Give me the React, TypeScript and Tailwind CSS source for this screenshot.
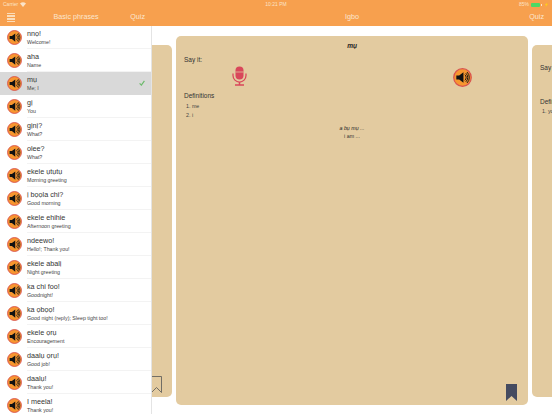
const rows: [string, string, boolean?][] = [
  ["nnọ!", "Welcome!"],
  ["aha", "Name"],
  ["mụ", "Me; I", true],
  ["gị", "You"],
  ["gịnị?", "What?"],
  ["olee?", "What?"],
  ["ekele ụtụtụ", "Morning greeting"],
  ["ị bọọla chi?", "Good morning"],
  ["ekele ehihie", "Afternoon greeting"],
  ["ndeewo!", "Hello!; Thank you!"],
  ["ekele abalị", "Night greeting"],
  ["ka chi foo!", "Goodnight!"],
  ["ka ọbọọ!", "Good night (reply); Sleep tight too!"],
  ["ekele ọrụ", "Encouragement"],
  ["daalụ ọrụ!", "Good job!"],
  ["daalụ!", "Thank you!"],
  ["I meela!", "Thank you!"],
];

function Speaker({ size }: { size: number }) {
  return (
    <svg width={size} height={size} viewBox="0 0 40 40" className="shrink-0">
      <circle cx="20" cy="20" r="18.5" fill="#F7962F" stroke="#D9534F" strokeWidth="2.5" />
      <path d="M7 16h6l9-7v22l-9-7H7z" fill="#111" />
      <path d="M25 14a8 8 0 0 1 0 12M27 11a12 12 0 0 1 0 18M29.500 8.500a16 16 0 0 1 0 23" fill="none" stroke="#111" strokeWidth="2" />
    </svg>
  );
}

function Mic() {
  return (
    <svg width="15" height="20" viewBox="0 0 30 40" fill="none">
      <rect x="7" y="1" width="16" height="26" rx="8" fill="#D9475A" />
      <path d="M7 12h16" stroke="#E3CBA0" strokeWidth="1.500" />
      <path d="M2 15v4a13 13 0 0 0 26 0v-4" stroke="#D9475A" strokeWidth="2.500" />
      <path d="M15 32v5M6 38h18" stroke="#D9475A" strokeWidth="3" />
    </svg>
  );
}

function Card({ children }: { children: React.ReactNode }) {
  return <div className="relative h-[352px] w-[330px] shrink-0 rounded-[5px] bg-[#E3CBA0]">{children}</div>;
}

export default function App() {
  return (
    <div
      className="flex h-[414px] w-[552px] flex-col overflow-hidden bg-white text-[#222]"
      style={{ fontFamily: '"Liberation Sans", Arial, sans-serif' }}
    >
      <div className="flex h-[9px] shrink-0 items-center justify-between bg-[#F7A04E] pl-[3px] pr-[3px] text-[5px] text-[#FBE3C8]">
        <div className="flex w-[100px] items-center gap-[2px]">
          Carrier
          <svg width="6" height="5" viewBox="0 0 12 10" fill="#FBE3C8">
            <path d="M6 10 0 3a9 9 0 0 1 12 0z" />
          </svg>
        </div>
        <div>10:21 PM</div>
        <div className="flex w-[100px] items-center justify-end gap-[1px]">
          85%
          <div className="ml-[1px] h-[4px] w-[9px] rounded-[1px] bg-[#4CD964]" />
          <div className="h-[2px] w-[1px] bg-[#FBE3C8]" />
          <span className="ml-[1px] text-[4px]">⚡</span>
        </div>
      </div>
      <div className="flex min-h-0 flex-1">
        <div className="z-10 flex w-[152px] shrink-0 flex-col bg-white">
          <div className="flex h-[17px] shrink-0 items-center bg-[#F7A04E] pl-[7px] pr-[7px] text-[7.200px] text-[#FBE6CF]">
            <div className="flex w-[20px] flex-col gap-[0.500px]">
              {[0, 1, 2, 3, 4, 5].map((i) => (
                <div key={i} className="h-[1px] w-[8px] bg-[#FBDDB9]" />
              ))}
            </div>
            <div className="flex-1 text-center [font-weight:500]">Basic phrases</div>
            <div className="w-[20px] text-right">Quiz</div>
          </div>
          <div className="min-h-0 flex-1 overflow-hidden border-r border-[#e4e4e4]">
            {rows.map(([title, detail, sel]) => (
              <div key={title + detail} className={`flex h-[23px] items-center pl-[7px] ${sel ? "bg-[#D9D9D9]" : ""}`}>
                <Speaker size={15} />
                <div className={`ml-[5px] flex h-full flex-1 flex-col justify-center border-b pr-[6px] ${sel ? "border-[#D9D9D9]" : "border-[#f3f3f3]"}`}>
                  <div className="flex items-center justify-between">
                    <div>
                      <div className="text-[7.200px] leading-[11px] text-[#333]">{title}</div>
                      <div className="text-[5.300px] leading-[7px] text-[#444]">{detail}</div>
                    </div>
                    {sel && (
                      <svg width="6" height="6" viewBox="0 0 10 10" fill="none" stroke="#6DBB6D" strokeWidth="2">
                        <path d="M1 5.500l3 3 5-7" />
                      </svg>
                    )}
                  </div>
                </div>
              </div>
            ))}
          </div>
        </div>
        <div className="flex min-w-0 flex-1 flex-col">
          <div className="flex h-[17px] shrink-0 items-center bg-[#F7A04E] pl-[8px] pr-[8px] text-[7.200px] text-[#FBE6CF]">
            <div className="w-[30px]" />
            <div className="flex-1 text-center [font-weight:500]">Igbo</div>
            <div className="w-[30px] text-right">Quiz</div>
          </div>
          <div className="flex min-h-0 flex-1 items-center justify-center gap-[4px] overflow-hidden pb-[4px] pt-[5px]">
            <Card>
              <div className="absolute bottom-[4px] right-[10px]">
                <svg width="11" height="17" viewBox="0 0 11 17" fill="none" stroke="#555" strokeWidth="0.800">
                  <path d="M.5.500h10v16l-5-5-5 5z" />
                </svg>
              </div>
            </Card>
            <div className="flex h-[369px] w-[352px] shrink-0 flex-col rounded-[5px] bg-[#E3CBA0] px-[8px] pt-[5.500px]">
              <div className="text-center text-[6.500px] font-bold italic leading-[8px] text-[#222]">mụ</div>
              <div className="mt-[6.500px] text-[6.500px] leading-[8px] text-[#333]">Say it:</div>
              <div className="flex h-[24px] items-center">
                <div className="ml-[48px]">
                  <Mic />
                </div>
                <div className="ml-[206px] mt-[2px]">
                  <Speaker size={19} />
                </div>
              </div>
              <div className="mt-[4px] text-[6.500px] leading-[8px] text-[#333]">Definitions</div>
              <div className="mt-[1.500px] pl-[2px] text-[5.300px] leading-[9px] text-[#444]">
                <div>1. me</div>
                <div>2. i</div>
              </div>
              <div className="mt-[4px] text-center text-[5.300px] italic leading-[8.500px] text-[#222]">a bụ mụ ...</div>
              <div className="text-center text-[5.300px] leading-[8.500px] text-[#333]">i am ...</div>
              <div className="mt-auto flex justify-end pb-[4px] pr-[3px]">
                <svg width="11" height="17" viewBox="0 0 11 17" fill="#454B60">
                  <path d="M0 0h11v17l-5.500-5L0 17z" />
                </svg>
              </div>
            </div>
            <Card>
              <div className="flex flex-col pl-[8px] pt-[19.500px] text-[6.500px] leading-[8px] text-[#333]">
                <div>Say it:</div>
                <div className="mt-[26px]">Definitions</div>
                <div className="mt-[1px] pl-[2px] text-[5.300px] text-[#444]">1. you</div>
              </div>
            </Card>
          </div>
        </div>
      </div>
    </div>
  );
}
